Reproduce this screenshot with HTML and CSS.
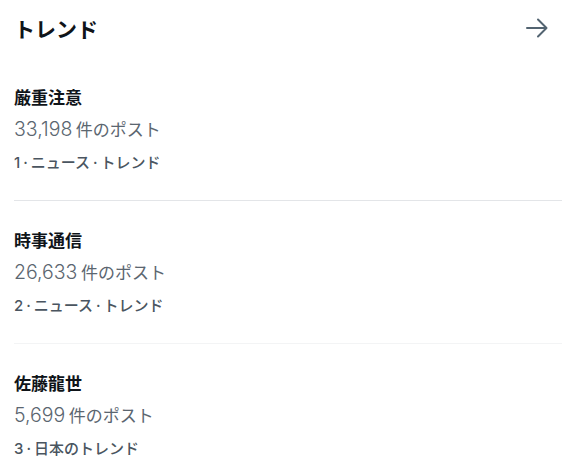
FILE: index.html
```html
<!DOCTYPE html>
<html lang="ja">
<head>
<meta charset="utf-8">
<link rel="stylesheet" href="styles.css">
</head>
<body>
<div class="panel">
  <header class="head">
    <h2 class="head-title">トレンド</h2>
    <svg class="arrow" width="24" height="24" viewBox="0 0 24 24" fill="none" stroke="currentColor" stroke-width="2" stroke-linecap="round" stroke-linejoin="round"><path d="M2 12h19M13 3.5l8.5 8.5-8.5 8.5"/></svg>
  </header>
  <ul class="list">
    <li class="item">
      <div class="name">厳重注意</div>
      <div class="count">33,198 <span class="unit">件のポスト</span></div>
      <div class="meta">1 · ニュース · トレンド</div>
    </li>
    <li class="item item-faint">
      <div class="name">時事通信</div>
      <div class="count">26,633 <span class="unit">件のポスト</span></div>
      <div class="meta">2 · ニュース · トレンド</div>
    </li>
    <li class="item item-last">
      <div class="name">佐藤龍世</div>
      <div class="count">5,699 <span class="unit">件のポスト</span></div>
      <div class="meta">3 · 日本のトレンド</div>
    </li>
  </ul>
</div>
</body>
</html>
```

FILE: styles.css
```css
* { box-sizing: border-box; }
html, body { margin: 0; padding: 0; background: #ffffff; }
body {
  font-family: "Inter", "Noto Sans CJK JP", sans-serif;
  color: #0f1419;
}
.panel { padding: 0 14px; }
.head {
  height: 58px;
  padding-bottom: 3px;
  display: flex;
  align-items: center;
  justify-content: space-between;
}
.head-title {
  margin: 0;
  font-size: 21px;
  font-weight: 700;
  line-height: 26px;
  font-family: "Noto Sans CJK JP", sans-serif;
}
.arrow { color: #536471; margin-right: 13px; width: 24px; height: 24px; }
.list { list-style: none; margin: 0; padding: 0; }
.item {
  padding: 28px 0 27px;
  border-bottom: 1px solid #e3e5e8;
  display: flex;
  flex-direction: column;
}
.item-faint { border-bottom-color: #f3f4f5; }
.item-last { border-bottom: none; }
.name {
  font-family: "Noto Sans CJK JP", sans-serif;
  font-size: 17px;
  font-weight: 700;
  line-height: 22px;
}
.count {
  margin-top: 9px;
  font-size: 19.5px;
  font-weight: 300;
  line-height: 24px;
  color: #5b6670;
  word-spacing: -2px;
}
.unit {
  font-family: "Noto Sans CJK JP", sans-serif;
  font-size: 17px;
  font-weight: 400;
}
.meta {
  margin-top: 12px;
  font-size: 15px;
  line-height: 20px;
  font-weight: 500;
  color: #4a5560;
  word-spacing: -1px;
}
```
